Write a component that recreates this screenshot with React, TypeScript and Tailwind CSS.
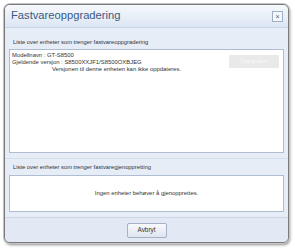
export default function App() {
  return (
    <div className="h-[250px] w-[295px] bg-white pl-[4px] pt-[4px] font-['Liberation_Sans',Arial,sans-serif]">
      <div className="flex h-[239px] w-[285px] flex-col overflow-hidden rounded-[6px] border border-[#7a7a7a] bg-[#e6edf7] shadow-[0_0_0_1px_#c4c4c4,1px_2px_3px_rgba(0,0,0,0.45)]">
        {/* title bar */}
        <div className="flex h-[23px] shrink-0 items-center justify-between border-b border-[#c9d6e8] bg-gradient-to-b from-[#f6f9fd] to-[#dce6f3] pl-[6px] pr-[5px]">
          <span className="text-[11.2px] leading-none text-[#3a5a85]">Fastvareoppgradering</span>
          <button className="flex h-[11px] w-[11px] items-center justify-center border border-[#9fb0c6] bg-[#f4f7fb] text-[7px] leading-none text-[#4a5d78]">
            ×
          </button>
        </div>

        {/* section 1 */}
        <div className="flex shrink-0 flex-col px-[4px] pb-[5px]">
          <div className="flex h-[21px] items-end pb-[3px] pl-[4px] text-[5.8px] leading-none text-[#333]">
            Liste over enheter som trenger fastvareoppgradering
          </div>
          <div className="flex h-[104px] justify-between border border-[#aebdd2] bg-white pl-[2px] pr-[4px] pt-[2px]">
            <div className="flex flex-col text-[5.9px] leading-[7px] text-[#333]">
              <span>Modellnavn : GT-S8500</span>
              <span>Gjeldende versjon : S8500XXJF1/S8500OXBJEG</span>
              <span className="pl-[40px]">Versjonen til denne enheten kan ikke oppdateres.</span>
            </div>
            <button
              disabled
              className="mt-[3px] h-[13px] w-[50px] rounded-[1px] bg-[#e9e9e9] text-[6.2px] leading-none text-[#f8f8f8]"
            >
              Oppgrader
            </button>
          </div>
        </div>

        <div className="h-px shrink-0 bg-[#d3deec]" />

        {/* section 2 */}
        <div className="flex shrink-0 flex-col px-[4px] pb-[5px]">
          <div className="flex h-[16px] items-end pb-[4px] pl-[4px] text-[5.8px] leading-none text-[#333]">
            Liste over enheter som trenger fastvaregjenoppretting
          </div>
          <div className="flex h-[37px] items-center justify-center border border-[#aebdd2] bg-white text-[5.9px] leading-none text-[#333]">
            Ingen enheter behøver å gjenopprettes.
          </div>
        </div>

        <div className="h-px shrink-0 bg-[#cbd7e7]" />

        {/* footer */}
        <div className="flex flex-1 items-start justify-center bg-[#e2e9f4] pt-[5px]">
          <button className="h-[15px] w-[40px] rounded-[2px] border border-[#a3b2c7] bg-gradient-to-b from-[#f7f9fc] to-[#dfe6f0] text-[6.4px] leading-none text-[#333]">
            Avbryt
          </button>
        </div>
      </div>
    </div>
  );
}
